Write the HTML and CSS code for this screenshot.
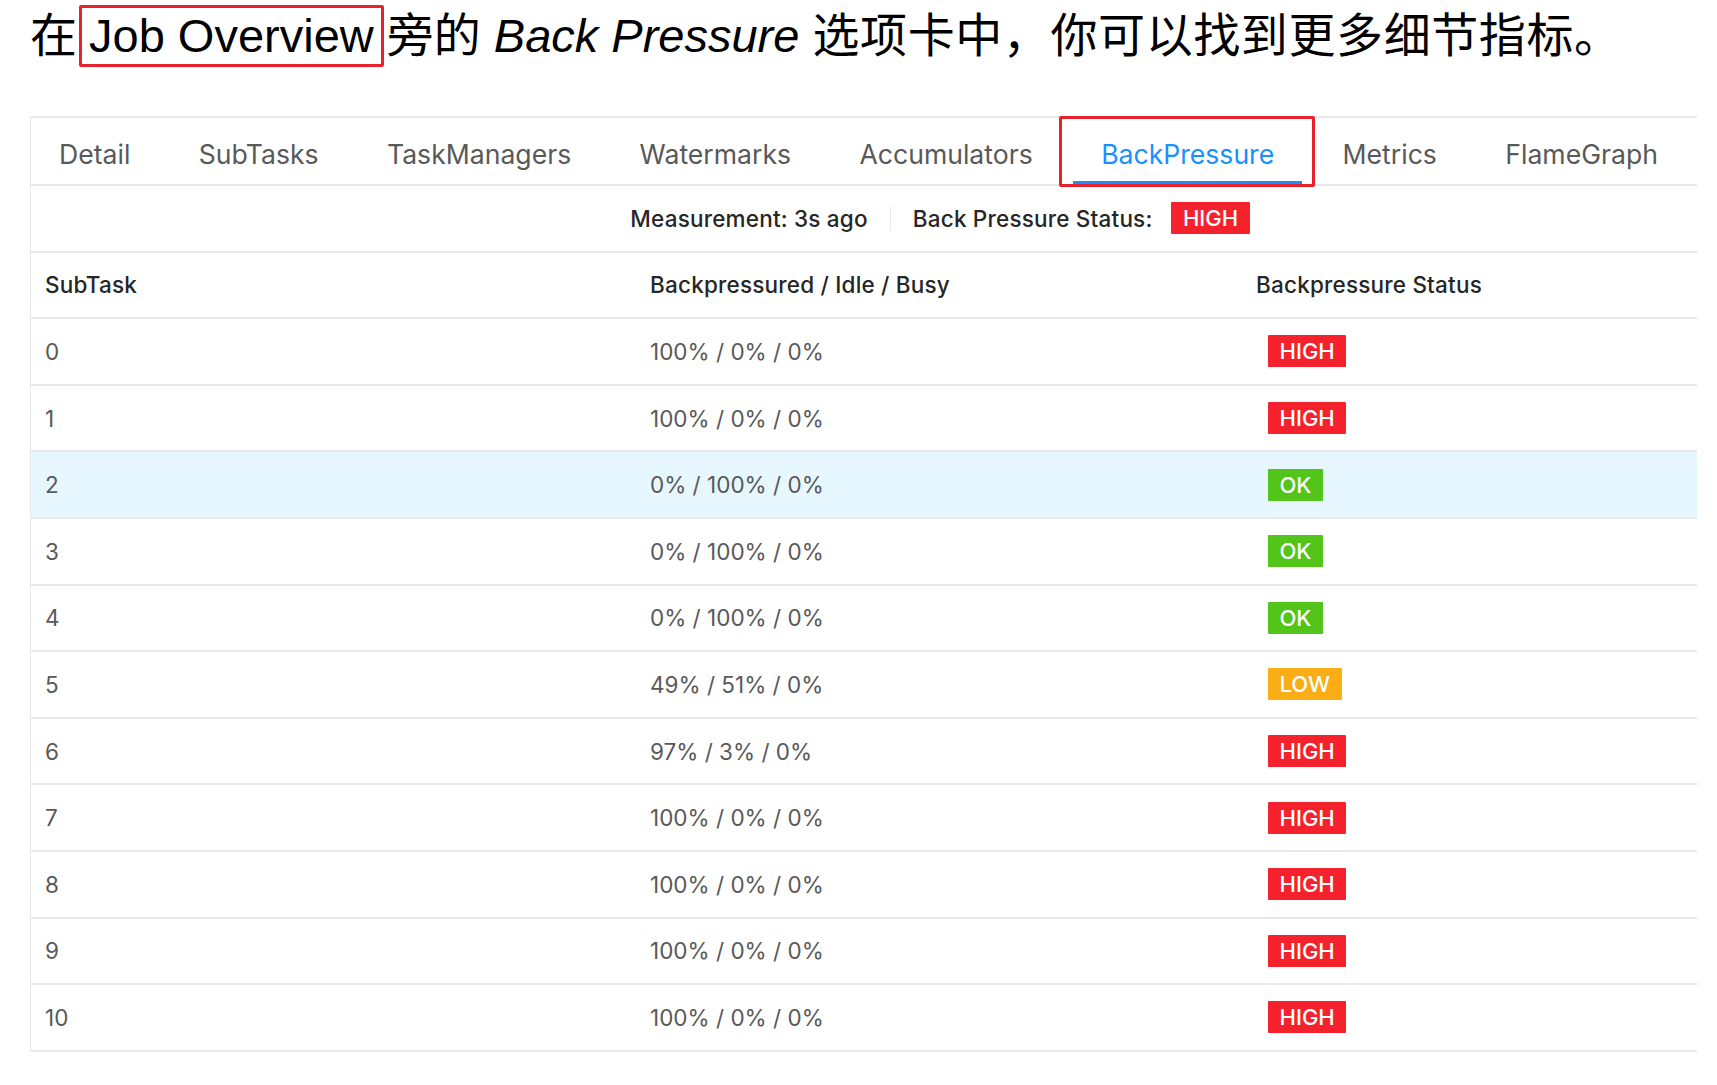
FILE: index.html
```html
<!DOCTYPE html>
<html lang="zh-CN">
<head>
<meta charset="utf-8">
<title>Back Pressure</title>
<link rel="stylesheet" href="styles.css">
</head>
<body>
<div class="title">在<span class="hl">Job Overview</span>旁的 <em>Back Pressure</em> <span class="cjk">选项卡中，你可以找到更多细节指标。</span></div>
<div class="clip">
  <div class="panel">
    <div class="tabs">
      <div class="tab">Detail</div>
      <div class="tab">SubTasks</div>
      <div class="tab">TaskManagers</div>
      <div class="tab">Watermarks</div>
      <div class="tab">Accumulators</div>
      <div class="tab active">BackPressure<span class="mark"></span></div>
      <div class="tab">Metrics</div>
      <div class="tab">FlameGraph</div>
    </div>
    <div class="status">
      <span>Measurement: 3s ago</span>
      <span class="divider"></span>
      <span>Back Pressure Status:</span>
      <span class="tag high">HIGH</span>
    </div>
    <div class="grid">
      <div class="row head"><div class="cell">SubTask</div><div class="cell">Backpressured / Idle / Busy</div><div class="cell">Backpressure Status</div></div>
      <div class="row"><div class="cell">0</div><div class="cell">100% / 0% / 0%</div><div class="cell"><span class="tag high">HIGH</span></div></div>
      <div class="row"><div class="cell">1</div><div class="cell">100% / 0% / 0%</div><div class="cell"><span class="tag high">HIGH</span></div></div>
      <div class="row hover"><div class="cell">2</div><div class="cell">0% / 100% / 0%</div><div class="cell"><span class="tag ok">OK</span></div></div>
      <div class="row"><div class="cell">3</div><div class="cell">0% / 100% / 0%</div><div class="cell"><span class="tag ok">OK</span></div></div>
      <div class="row"><div class="cell">4</div><div class="cell">0% / 100% / 0%</div><div class="cell"><span class="tag ok">OK</span></div></div>
      <div class="row"><div class="cell">5</div><div class="cell">49% / 51% / 0%</div><div class="cell"><span class="tag low">LOW</span></div></div>
      <div class="row"><div class="cell">6</div><div class="cell">97% / 3% / 0%</div><div class="cell"><span class="tag high">HIGH</span></div></div>
      <div class="row"><div class="cell">7</div><div class="cell">100% / 0% / 0%</div><div class="cell"><span class="tag high">HIGH</span></div></div>
      <div class="row"><div class="cell">8</div><div class="cell">100% / 0% / 0%</div><div class="cell"><span class="tag high">HIGH</span></div></div>
      <div class="row"><div class="cell">9</div><div class="cell">100% / 0% / 0%</div><div class="cell"><span class="tag high">HIGH</span></div></div>
      <div class="row"><div class="cell">10</div><div class="cell">100% / 0% / 0%</div><div class="cell"><span class="tag high">HIGH</span></div></div>
    </div>
  </div>
</div>
</body>
</html>
```

FILE: styles.css
```css
html, body {
  margin: 0;
  padding: 0;
  background: #ffffff;
}

.title {
  padding: 5px 0 0 30px;
  height: 62px;
  font-family: "Liberation Sans", "Noto Sans CJK SC", sans-serif;
  font-size: 47px;
  line-height: 62px;
  color: #000000;
  white-space: nowrap;
}

.title em {
  font-style: italic;
}

.cjk {
  letter-spacing: 0.6px;
}

.hl {
  display: inline-block;
  border: 3px solid #e8222c;
  border-radius: 2px;
  padding: 0 7px;
  line-height: 56px;
  margin: 0 3px 0 2px;
}

.clip {
  margin: 49px 0 0 30px;
  width: 1667px;
  overflow: hidden;
}

.panel {
  width: 1818px;
  border-left: 1px solid #e8e8e8;
  font-family: "Inter", "Liberation Sans", sans-serif;
}

.tabs {
  display: flex;
  gap: 12.4px;
  border-top: 2px solid #e8e8e8;
  border-bottom: 2px solid #e8e8e8;
  height: 66px;
}

.tab {
  position: relative;
  padding: 6px 28px 0;
  line-height: 60px;
  font-size: 26.6px;
  color: #595959;
}

.tab.active {
  color: #1890ff;
}

.tab.active::after {
  content: "";
  position: absolute;
  left: 0;
  right: 0;
  bottom: 0;
  height: 3px;
  background: #1890ff;
}

.mark {
  position: absolute;
  left: -14px;
  right: -13px;
  top: -2px;
  bottom: -3px;
  border: 3px solid #e8222c;
  border-radius: 2px;
}

.status {
  display: flex;
  align-items: center;
  justify-content: center;
  height: 66.6px;
  box-sizing: border-box;
  border-bottom: 2px solid #e8e8e8;
  font-size: 22.5px;
  font-weight: 500;
  letter-spacing: 0.2px;
  color: #262626;
}

.divider {
  width: 1px;
  height: 23px;
  background: #e8e8e8;
  margin: 0 22px;
}

.status .tag {
  margin-left: 19px;
}

.tag {
  display: inline-block;
  height: 32px;
  line-height: 32px;
  padding: 0 11.5px;
  font-size: 22px;
  font-weight: 500;
  letter-spacing: 0;
  color: #ffffff;
  border-radius: 1px;
}

.tag.high { background: #f5222d; }
.tag.ok { background: #52c41a; }
.tag.low { background: #faad14; }

.row {
  display: grid;
  grid-template-columns: 605px 606px 1fr;
  height: 66.6px;
  box-sizing: border-box;
  border-bottom: 2px solid #e8e8e8;
  font-size: 22.5px;
  color: #595959;
}

.row.head {
  color: #262626;
  font-weight: 500;
  letter-spacing: 0.2px;
}

.row.hover {
  background: #e6f7ff;
}

.cell {
  display: flex;
  align-items: center;
  padding: 0 14px;
}

.cell .tag {
  margin-left: 12px;
}
```
